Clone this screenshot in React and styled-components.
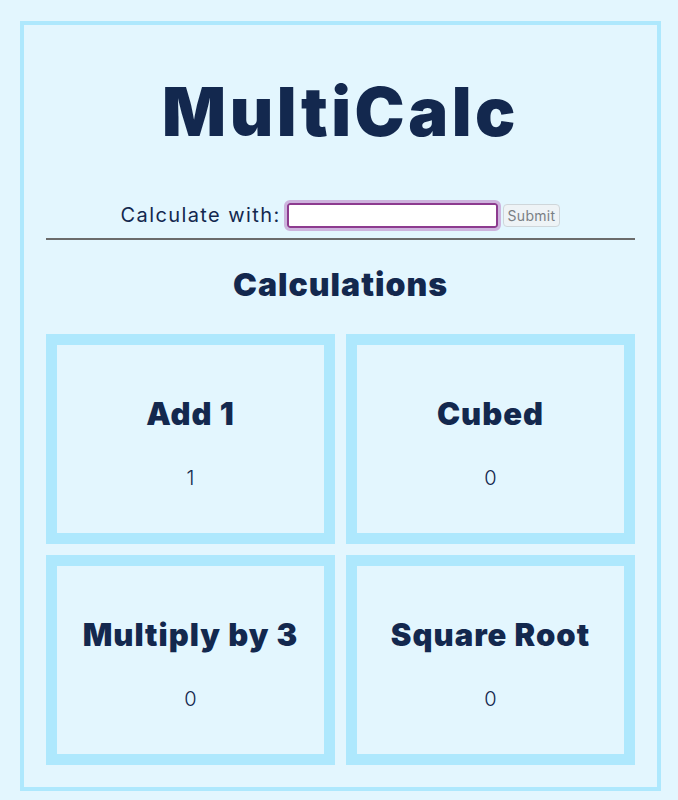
import React from "react";
import styled, { createGlobalStyle } from "styled-components";

const Global = createGlobalStyle`
  html, body { margin: 0; padding: 0; }
  body {
    background: #e3f6fe;
    font-family: "Inter", "Liberation Sans", sans-serif;
    color: #13284e;
  }
`;

const Frame = styled.div`
  box-sizing: border-box;
  width: 641px;
  margin: 21px 0 0 20px;
  border: 4px solid #aee8fd;
  padding: 0 22px 22px;
`;

const Title = styled.h1`
  margin: 0;
  padding-top: 47px;
  height: 145px;
  box-sizing: border-box;
  text-align: center;
  font-size: 67px;
  line-height: 80px;
  font-weight: 900;
  letter-spacing: 3.5px;
`;

const Form = styled.form`
  display: flex;
  justify-content: center;
  align-items: center;
  gap: 4px;
  height: 70px;
  padding-top: 22px;
  box-sizing: border-box;
  border-bottom: 2px solid #6b6b6b;
`;

const Label = styled.label`
  font-size: 20px;
  font-weight: 400;
  letter-spacing: 1.4px;
  color: #13284e;
  margin-right: 2px;
`;

const NumberInput = styled.input`
  box-sizing: border-box;
  width: 211px;
  height: 25px;
  border: 2px solid #8d3b8f;
  border-radius: 3px;
  outline: 3px solid #cdb3dd;
  outline-offset: 0;
  background: #fff;
  padding: 0 4px;
  font-size: 14px;
`;

const SubmitButton = styled.button`
  box-sizing: border-box;
  height: 23px;
  padding: 0 4px;
  margin-left: 1px;
  font-family: "Inter", "Liberation Sans", sans-serif;
  font-size: 14px;
  letter-spacing: 0.3px;
  color: #7a7f85;
  background: #eef3f6;
  border: 1px solid #cfd6da;
  border-radius: 4px;
`;

const SectionTitle = styled.h2`
  margin: 0;
  padding-top: 27px;
  height: 94px;
  box-sizing: border-box;
  text-align: center;
  font-size: 32px;
  line-height: 36px;
  font-weight: 900;
  letter-spacing: 1px;
`;

const Grid = styled.div`
  display: grid;
  grid-template-columns: 1fr 1fr;
  gap: 11px;
`;

const Card = styled.div`
  box-sizing: border-box;
  height: 210px;
  border: 11px solid #aee8fd;
  display: flex;
  flex-direction: column;
  align-items: center;
  justify-content: center;
  padding-top: 8px;
`;

const CardTitle = styled.h3`
  margin: 0;
  font-size: 31px;
  line-height: 36px;
  font-weight: 900;
  letter-spacing: 1px;
`;

const CardValue = styled.p`
  margin: 34px 0 0;
  font-size: 20px;
  line-height: 24px;
  font-weight: 300;
`;

const calcs = [
  { name: "Add 1", value: 1 },
  { name: "Cubed", value: 0 },
  { name: "Multiply by 3", value: 0 },
  { name: "Square Root", value: 0 },
];

export default function App() {
  return (
    <>
      <Global />
      <Frame>
        <Title>MultiCalc</Title>
        <Form onSubmit={(e) => e.preventDefault()}>
          <Label htmlFor="num">Calculate with:</Label>
          <NumberInput id="num" type="number" />
          <SubmitButton type="submit">Submit</SubmitButton>
        </Form>
        <SectionTitle>Calculations</SectionTitle>
        <Grid>
          {calcs.map((c) => (
            <Card key={c.name}>
              <CardTitle>{c.name}</CardTitle>
              <CardValue>{c.value}</CardValue>
            </Card>
          ))}
        </Grid>
      </Frame>
    </>
  );
}
